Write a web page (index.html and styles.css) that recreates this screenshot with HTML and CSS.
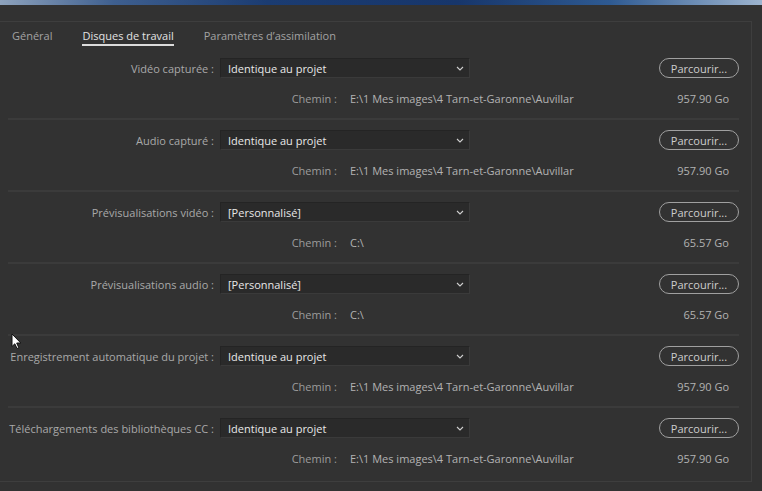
FILE: index.html
```html
<!DOCTYPE html>
<html lang="fr">
<head>
    <meta charset="UTF-8">
    <title>Préférences - Disques de travail</title>
    <link rel="stylesheet" href="styles.css">
</head>
<body>
    <div class="title-strip"></div>

    <div class="prefs-panel">
        <div class="tabs">
            <span class="tab">Général</span>
            <span class="tab active">Disques de travail</span>
            <span class="tab">Paramètres d’assimilation</span>
        </div>

        <div class="disk-row">
            <div class="disk-line">
                <span class="disk-label">Vidéo capturée :</span>
                <div class="disk-select"><span>Identique au projet</span><svg class="chevron" width="8" height="5" viewBox="0 0 8 5"><polyline points="1,1 4,4 7,1" /></svg></div>
                <button class="browse-button">Parcourir...</button>
            </div>
            <div class="path-line">
                <span class="path-label">Chemin :</span>
                <span class="path-value">E:\1 Mes images\4 Tarn-et-Garonne\Auvillar</span>
                <span class="path-size">957.90 Go</span>
            </div>
        </div>

        <div class="disk-row">
            <div class="disk-line">
                <span class="disk-label">Audio capturé :</span>
                <div class="disk-select"><span>Identique au projet</span><svg class="chevron" width="8" height="5" viewBox="0 0 8 5"><polyline points="1,1 4,4 7,1" /></svg></div>
                <button class="browse-button">Parcourir...</button>
            </div>
            <div class="path-line">
                <span class="path-label">Chemin :</span>
                <span class="path-value">E:\1 Mes images\4 Tarn-et-Garonne\Auvillar</span>
                <span class="path-size">957.90 Go</span>
            </div>
        </div>

        <div class="disk-row">
            <div class="disk-line">
                <span class="disk-label">Prévisualisations vidéo :</span>
                <div class="disk-select"><span>[Personnalisé]</span><svg class="chevron" width="8" height="5" viewBox="0 0 8 5"><polyline points="1,1 4,4 7,1" /></svg></div>
                <button class="browse-button">Parcourir...</button>
            </div>
            <div class="path-line">
                <span class="path-label">Chemin :</span>
                <span class="path-value">C:\</span>
                <span class="path-size">65.57 Go</span>
            </div>
        </div>

        <div class="disk-row">
            <div class="disk-line">
                <span class="disk-label">Prévisualisations audio :</span>
                <div class="disk-select"><span>[Personnalisé]</span><svg class="chevron" width="8" height="5" viewBox="0 0 8 5"><polyline points="1,1 4,4 7,1" /></svg></div>
                <button class="browse-button">Parcourir...</button>
            </div>
            <div class="path-line">
                <span class="path-label">Chemin :</span>
                <span class="path-value">C:\</span>
                <span class="path-size">65.57 Go</span>
            </div>
        </div>

        <div class="disk-row">
            <div class="disk-line">
                <span class="disk-label">Enregistrement automatique du projet :</span>
                <div class="disk-select"><span>Identique au projet</span><svg class="chevron" width="8" height="5" viewBox="0 0 8 5"><polyline points="1,1 4,4 7,1" /></svg></div>
                <button class="browse-button">Parcourir...</button>
            </div>
            <div class="path-line">
                <span class="path-label">Chemin :</span>
                <span class="path-value">E:\1 Mes images\4 Tarn-et-Garonne\Auvillar</span>
                <span class="path-size">957.90 Go</span>
            </div>
        </div>

        <div class="disk-row last">
            <div class="disk-line">
                <span class="disk-label">Téléchargements des bibliothèques CC :</span>
                <div class="disk-select"><span>Identique au projet</span><svg class="chevron" width="8" height="5" viewBox="0 0 8 5"><polyline points="1,1 4,4 7,1" /></svg></div>
                <button class="browse-button">Parcourir...</button>
            </div>
            <div class="path-line">
                <span class="path-label">Chemin :</span>
                <span class="path-value">E:\1 Mes images\4 Tarn-et-Garonne\Auvillar</span>
                <span class="path-size">957.90 Go</span>
            </div>
        </div>
    </div>

    <!-- mouse pointer caught in the screenshot -->
    <svg class="mouse-pointer" width="11" height="17" viewBox="0 0 11 17">
        <path d="M1 1 L1 13.5 L3.8 10.8 L6 15.5 L7.8 14.7 L5.7 10 L9.8 10 Z" fill="#ffffff" stroke="#111111" stroke-width="1" stroke-linejoin="round" />
    </svg>
</body>
</html>
```

FILE: styles.css
```css
body {
    margin: 0;
    padding: 0;
    background-color: #323232;
    font-family: 'Open Sans', 'Noto Sans', sans-serif;
    font-size: 11px;
    color: #aaaaaa;
    width: 762px;
    height: 491px;
    overflow: hidden;
    position: relative;
}

.title-strip {
    height: 5px;
    background: linear-gradient(90deg, #8ea3bd 0%, #3e5f8f 15%, #1b3c72 35%, #17366b 60%, #2e5a92 80%, #9db4cf 100%);
}

.prefs-panel {
    margin-top: 16px;
    width: 752px;
    height: 461px;
    box-sizing: border-box;
    border: 1px solid #3e3e3e;
    border-left: none;
}

.tabs {
    display: flex;
    height: 26px;
    padding-left: 12px;
    gap: 30px;
    box-sizing: border-box;
}

.tab {
    color: #a3a3a3;
    line-height: 28px;
    height: 22px;
}

.tab.active {
    color: #e2e2e2;
    border-bottom: 2px solid #dcdcdc;
}

.disk-row {
    margin: 0 12px 0 8px;
    padding: 10px 0;
    border-bottom: 2px solid #3b3b3b;
}

.disk-row.last {
    border-bottom: none;
}

.disk-line,
.path-line {
    display: flex;
    align-items: center;
    height: 20px;
}

.path-line {
    margin-top: 10px;
}

.disk-label {
    width: 206px;
    text-align: right;
    white-space: nowrap;
    color: #a9a9a9;
}

.disk-select {
    margin-left: 6px;
    width: 250px;
    height: 20px;
    box-sizing: border-box;
    display: flex;
    align-items: center;
    justify-content: space-between;
    padding: 0 5px 0 7px;
    background-color: #2a2a2a;
    border: 1px solid #242424;
    border-bottom-color: #3a3a3a;
    border-right-color: #3a3a3a;
    color: #e8e8e8;
}

.chevron polyline {
    fill: none;
    stroke: #cfcfcf;
    stroke-width: 1.1;
}

.browse-button {
    margin-left: auto;
    width: 80px;
    height: 20px;
    padding: 0;
    border: 1px solid #a0a0a0;
    border-radius: 10px;
    background-color: transparent;
    color: #cdcdcd;
    font-family: inherit;
    font-size: 11px;
}

.path-label {
    width: 329px;
    text-align: right;
    color: #9d9d9d;
}

.path-value {
    margin-left: 13px;
    color: #b3b3b3;
}

.path-size {
    margin-left: auto;
    padding-right: 10px;
    color: #b3b3b3;
}

.mouse-pointer {
    position: absolute;
    left: 11px;
    top: 333px;
}
```
